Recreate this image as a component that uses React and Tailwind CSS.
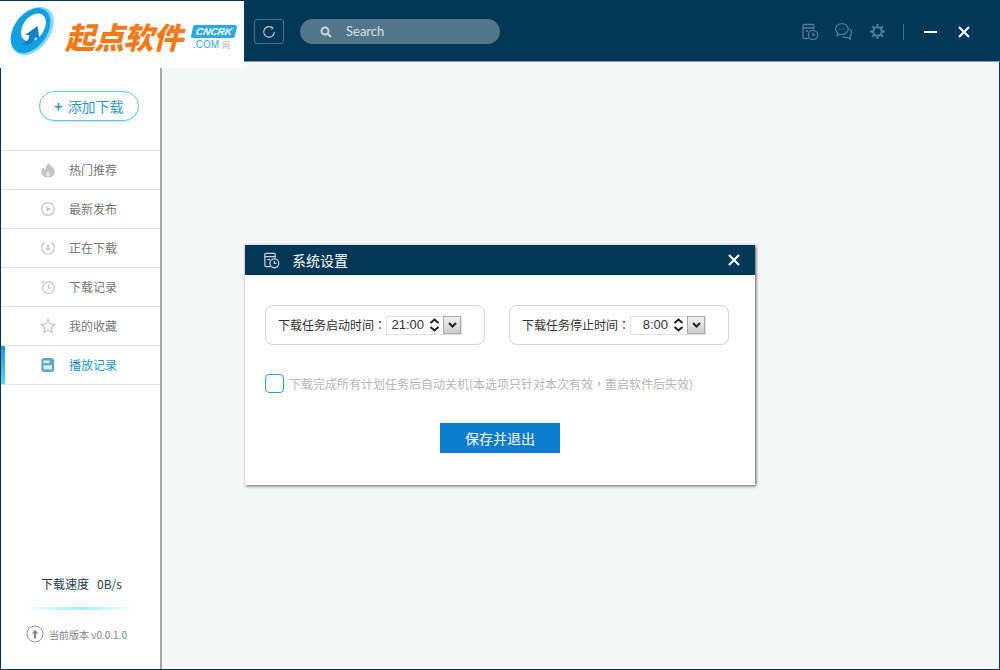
import React from "react";

function CalClock({ className, color = "#4f7f9b" }) {
  return (
    <svg className={className} viewBox="0 0 18 18" fill="none" stroke={color} strokeWidth="1.3">
      <path d="M7.500 15.500H3.200A1.200 1.200 0 0 1 2 14.300V2.700A1.200 1.200 0 0 1 3.200 1.500h8.600A1.200 1.200 0 0 1 13 2.700V6" />
      <path d="M2 5h11M4.500 8h3" />
      <circle cx="12" cy="12" r="4.700" />
      <path d="M12 9.500V12h2.200" />
    </svg>
  );
}

function Logo() {
  return (
    <div className="absolute left-0 top-[1px] z-10 flex h-[67px] w-[244px] bg-white">
      <svg className="absolute left-[8px] top-[5px] h-[50px] w-[47px]" viewBox="0 0 47 50">
        <ellipse cx="24.500" cy="25" rx="17.500" ry="27" transform="rotate(36 24.500 25)" fill="#86d8f5" />
        <ellipse cx="22.500" cy="24.500" rx="16.500" ry="25" transform="rotate(36 22.500 24.500)" fill="#149fe2" />
        <ellipse cx="25.500" cy="21.500" rx="10.500" ry="15.500" transform="rotate(36 25.500 21.500)" fill="#ffffff" />
        <path d="M13 38C19 36 22 33 21 29L17 29 29.500 20 31.500 34 27.500 31C26 37 20 40 13 38Z" fill="#127fc4" />
      </svg>
      <span className="absolute left-[65px] top-[16px] whitespace-nowrap font-['Noto_Sans_CJK_SC',sans-serif] text-[30px] leading-[38px] font-black italic tracking-[-0.7px] text-[#f27a1a]">
        起点软件
      </span>
      <span className="absolute left-[192px] top-[24px] h-[13px] w-[44px] -skew-x-12 rounded-[2px] bg-[#2fa8e6] text-center font-['Liberation_Sans',sans-serif] text-[10px] leading-[13px] font-bold italic text-white">
        CNCRK
      </span>
      <span className="absolute left-[193px] top-[37px] font-['Liberation_Sans',sans-serif] text-[10px] leading-[13px] text-[#2fa8e6]">
        .COM
      </span>
      <span className="absolute left-[222px] top-[37px] font-['Noto_Sans_CJK_SC',sans-serif] text-[8px] leading-[13px] text-[#aaa]">
        网
      </span>
    </div>
  );
}

function Header() {
  return (
    <header className="relative flex h-[62px] shrink-0 items-center border-b border-[#7f98a8] bg-[#023757] pl-[254px] pr-[30px] pt-[2px]">
      <button className="flex h-[25px] w-[30px] items-center justify-center rounded-[3px] border border-[#3f7693]">
        <svg className="h-[14px] w-[14px]" viewBox="0 0 14 14" fill="none" stroke="#b9ccd8" strokeWidth="1.200">
          <path d="M10.900 3.300A5.300 5.300 0 1 0 12.300 7" />
          <path d="M9.800 1.500l1.300 2-2 .8" strokeWidth="0.800" />
        </svg>
      </button>
      <div className="ml-[16px] flex h-[25px] w-[200px] items-center rounded-full bg-[#53768b] pl-[20px]">
        <svg className="h-[12px] w-[12px]" viewBox="0 0 12 12" fill="none" stroke="#c8d5dd" strokeWidth="2">
          <circle cx="5" cy="5" r="3.500" />
          <path d="M7.500 7.500L11 11" />
        </svg>
        <span className="ml-[14px] font-['Lato',sans-serif] text-[13px] text-[#d5e0e6]">Search</span>
      </div>
      <div className="ml-auto flex items-center">
        <CalClock className="h-[18px] w-[18px]" color="#4f7f9b" />
        <svg className="ml-[15px] h-[19px] w-[19px]" viewBox="0 0 18 18" fill="none" stroke="#4f7f9b" strokeWidth="1.200">
          <path d="M7.500 1.500c3.300 0 6 2.300 6 5.200s-2.700 5.300-6 5.300c-.8 0-1.500-.1-2.200-.4L3 13l.3-2.700C2.200 9.300 1.500 8.100 1.500 6.700c0-2.900 2.700-5.200 6-5.200Z" />
          <path d="M15 6.500c1 .9 1.700 2.100 1.700 3.500 0 1.300-.6 2.400-1.500 3.200l.3 3-2.800-1.500c-1.600.3-3.200-.2-4.400-1.200" />
          <path d="M5 6.800h.9M7.100 6.800H8M9.200 6.800h.9" />
        </svg>
        <svg className="ml-[16px] h-[17px] w-[17px]" viewBox="0 0 24 24" fill="none" stroke="#4f7f9b" strokeWidth="2.800">
          <circle cx="12" cy="12" r="6" />
          <path d="M12 1.500v4M12 18.500v4M1.500 12h4M18.500 12h4M4.600 4.600l2.800 2.800M16.600 16.600l2.800 2.800M4.600 19.400l2.800-2.800M16.600 7.400l2.800-2.800" />
        </svg>
        <div className="ml-[17px] h-[16px] w-[1px] bg-[#3f6f8c]" />
        <div className="ml-[20px] h-[2px] w-[13px] bg-white" />
        <svg className="ml-[21px] h-[12px] w-[12px]" viewBox="0 0 12 12" stroke="#ffffff" strokeWidth="2">
          <path d="M1 1l10 10M11 1L1 11" />
        </svg>
      </div>
    </header>
  );
}

const iconProps = { className: "h-[16px] w-[16px]", viewBox: "0 0 16 16", fill: "none", stroke: "#c4c4c4", strokeWidth: 1.2 };

const navItems = [
  {
    label: "热门推荐",
    icon: (
      <svg className="h-[16px] w-[16px]" viewBox="0 0 16 16" fill="#c4c4c4">
        <path d="M8.500 0.500c.5 2.500 6.300 4.700 6.300 9.500 0 3.300-3.300 5.500-6.800 5.500S1.200 13.300 1.200 10.300c0-2.300 1.500-3.800 2.500-5 .1 1.300.6 2.200 1.300 2.700C5 5 7.500 3 8.500.5Z" />
        <path d="M8 9c1 1 2 2 2 3.500S9 15 8 15s-2-1-2-2.500S7 10 8 9Z" fill="#e2e2e2" />
      </svg>
    ),
  },
  {
    label: "最新发布",
    icon: (
      <svg {...iconProps}>
        <circle cx="8" cy="8" r="6.300" />
        <path d="M6.500 5.300L10.700 8l-4.200 2.700Z" fill="#c4c4c4" stroke="none" />
      </svg>
    ),
  },
  {
    label: "正在下载",
    icon: (
      <svg {...iconProps}>
        <path d="M5 2.400a6.300 6.300 0 1 0 6 0" />
        <path d="M8 4.500v5" strokeWidth="1.600" />
        <path d="M5.500 8L8 11l2.500-3Z" fill="#c4c4c4" stroke="none" />
      </svg>
    ),
  },
  {
    label: "下载记录",
    icon: (
      <svg {...iconProps}>
        <circle cx="8.500" cy="8.700" r="5.800" />
        <path d="M8.500 5.500v3.500H11.500" />
        <path d="M1.500 4.500L4 1.800" />
      </svg>
    ),
  },
  {
    label: "我的收藏",
    icon: (
      <svg {...iconProps}>
        <path d="M8 1.500l2 4.400 4.700.6-3.500 3.200 1 4.800L8 12.100l-4.200 2.400 1-4.800L1.300 6.500 6 5.900Z" />
      </svg>
    ),
  },
  {
    label: "播放记录",
    active: true,
    icon: (
      <svg className="h-[16px] w-[16px]" viewBox="0 0 16 16" fill="none">
        <rect x="1.500" y="1" width="12.500" height="14" rx="2.500" fill="#5fa5d0" />
        <rect x="3.500" y="3.500" width="6" height="2.600" fill="#dceef7" />
        <rect x="3.500" y="8.300" width="8.500" height="4.200" fill="#dceef7" />
      </svg>
    ),
  },
];

function Sidebar() {
  return (
    <aside className="flex w-[161px] shrink-0 flex-col border-r-2 border-[#a3a8ab] bg-white">
      <div className="h-[89px] shrink-0 border-b border-[#e3e3e3] pl-[38px] pt-[29px]">
        <button className="flex h-[30px] w-[100px] items-center justify-center rounded-full border border-[#64c3dd] font-['Noto_Sans_CJK_SC',sans-serif] text-[14px] text-[#2f9ac4] shadow-[0_1px_1px_#c9f0f6]">
          <span className="mr-[5px] font-bold">+</span>添加下载
        </button>
      </div>
      {navItems.map((item) => (
        <div
          key={item.label}
          className={
            "relative flex h-[39px] shrink-0 items-center border-b border-[#e3e3e3] pl-[39px] " +
            (item.active ? "text-[#1e94c6]" : "text-[#777777]")
          }
        >
          {item.active && <div className="absolute left-0 top-0 h-[38px] w-[4px] bg-gradient-to-b from-[#0b99d8] to-[#5fd6ee]" />}
          {item.icon}
          <span className="ml-[13px] font-['Noto_Sans_CJK_SC',sans-serif] text-[12px]">{item.label}</span>
        </div>
      ))}
      <div className="mt-auto flex flex-col">
        <div className="pl-[40px] font-['Noto_Sans_CJK_SC',sans-serif] text-[12px] leading-[18px] text-[#23404f]">
          下载速度<span className="ml-[8px]">0B/s</span>
        </div>
        <div className="ml-[25px] mt-[14px] h-[3px] w-[108px] bg-gradient-to-r from-transparent via-[#a0f0f4] to-transparent" />
        <div className="mb-[26px] ml-[25px] mt-[15px] flex items-center">
          <svg className="h-[18px] w-[18px]" viewBox="0 0 18 18" fill="none">
            <circle cx="9" cy="9" r="8" stroke="#999" strokeWidth="1" />
            <path d="M9 4.500L12 8.500H10.200V13.500H7.800V8.500H6Z" fill="#888" />
          </svg>
          <span className="ml-[5px] font-['Noto_Sans_CJK_SC',sans-serif] text-[10px] text-[#888]">
            当前版本 v0.0.1.0
          </span>
        </div>
      </div>
    </aside>
  );
}

function TimeField({ label, value, className }) {
  return (
    <div className={"flex h-[40px] items-center rounded-[8px] border border-[#d6d6d6] pl-[12px] " + className}>
      <span className="whitespace-nowrap font-['Noto_Sans_CJK_SC',sans-serif] text-[12px] text-[#333]">{label}</span>
      <span className="font-['Noto_Sans_CJK_TC',sans-serif] text-[12px] text-[#333]">：</span>
      <div className="flex h-[19px] w-[76px] items-center border border-[#e3e3e3]">
        <span className="w-[37px] text-right font-['Liberation_Sans',sans-serif] text-[13px] text-[#333]">{value}</span>
        <svg className="ml-[5px] h-[14px] w-[11px]" viewBox="0 0 10 14" fill="none" stroke="#222" strokeWidth="2">
          <path d="M1 5l4-3.500L9 5M1 9l4 3.500L9 9" />
        </svg>
        <div className="ml-auto flex h-[18px] w-[18px] items-center justify-center border border-[#aaa] bg-gradient-to-b from-[#f0f0f0] to-[#cfcfcf]">
          <svg className="h-[6px] w-[9px]" viewBox="0 0 9 6" fill="none" stroke="#222" strokeWidth="2">
            <path d="M1 1l3.500 3.500L8 1" />
          </svg>
        </div>
      </div>
    </div>
  );
}

function Dialog() {
  return (
    <div className="absolute left-[245px] top-[245px] z-20 flex h-[240px] w-[510px] flex-col bg-white shadow-[1px_1px_3px_rgba(0,0,0,0.65)]">
      <div className="flex h-[30px] shrink-0 items-center bg-[#023757] pl-[18px] pr-[15px]">
        <CalClock className="h-[17px] w-[17px]" color="#c9d6de" />
        <span className="ml-[12px] font-['Noto_Sans_CJK_SC',sans-serif] text-[14px] text-white">系统设置</span>
        <svg className="ml-auto h-[12px] w-[12px]" viewBox="0 0 12 12" stroke="#fff" strokeWidth="2">
          <path d="M1 1l10 10M11 1L1 11" />
        </svg>
      </div>
      <div className="mt-[30px] flex px-[20px]">
        <TimeField label="下载任务启动时间" value="21:00" className="w-[220px]" />
        <TimeField label="下载任务停止时间" value="8:00" className="ml-[24px] w-[220px]" />
      </div>
      <div className="mt-[29px] flex items-center pl-[20px]">
        <div className="h-[19px] w-[19px] rounded-[4px] border border-[#2aa3c7]" />
        <span className="ml-[5px] whitespace-nowrap font-['Noto_Sans_CJK_SC',sans-serif] text-[12px] text-[#b8b8b8]">
          下载完成所有计划任务后自动关机(本选项只针对本次有效<span className="font-['Noto_Sans_CJK_TC',sans-serif]">，</span>重启软件后失效)
        </span>
      </div>
      <button className="mx-auto mt-[30px] h-[30px] w-[120px] bg-[#0a7ccb] font-['Noto_Sans_CJK_SC',sans-serif] text-[14px] text-white">
        保存并退出
      </button>
    </div>
  );
}

export default function App() {
  return (
    <div className="relative flex h-[670px] w-[1000px] flex-col overflow-hidden bg-[#023757]">
      <Logo />
      <Header />
      <div className="flex min-h-0 flex-1 pb-[1px] pl-[1px] pr-[1px]">
        <Sidebar />
        <main className="flex-1 bg-[#f6f8f8]" />
      </div>
      <Dialog />
    </div>
  );
}
